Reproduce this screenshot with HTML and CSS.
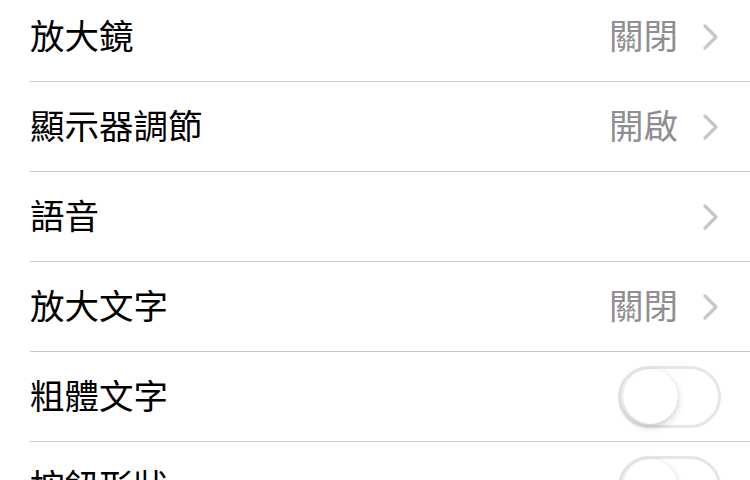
FILE: index.html
```html
<!DOCTYPE html>
<html lang="zh-Hant">
<head>
<meta charset="utf-8">
<link rel="stylesheet" href="styles.css">
</head>
<body>
<ul class="list">
  <li class="row"><span class="label">放大鏡</span><span class="value">關閉</span><svg class="chev" viewBox="0 0 16 26"><path d="M2 2 L13 13 L2 24" /></svg></li>
  <li class="row"><span class="label">顯示器調節</span><span class="value">開啟</span><svg class="chev" viewBox="0 0 16 26"><path d="M2 2 L13 13 L2 24" /></svg></li>
  <li class="row"><span class="label">語音</span><svg class="chev" viewBox="0 0 16 26"><path d="M2 2 L13 13 L2 24" /></svg></li>
  <li class="row"><span class="label">放大文字</span><span class="value">關閉</span><svg class="chev" viewBox="0 0 16 26"><path d="M2 2 L13 13 L2 24" /></svg></li>
  <li class="row"><span class="label">粗體文字</span><span class="switch"><span class="knob"></span></span></li>
  <li class="row"><span class="label">按鈕形狀</span><span class="switch"><span class="knob"></span></span></li>
</ul>
</body>
</html>
```
FILE: styles.css
```css
html, body {
  margin: 0;
  padding: 0;
  background: #fff;
  overflow: hidden;
}
.list {
  list-style: none;
  margin: -8px 0 0 30px;
  padding: 0;
  font-family: "Noto Sans CJK TC", "Noto Sans", sans-serif;
}
.row {
  height: 89px;
  border-bottom: 1px solid #c8c7cc;
  display: flex;
  align-items: center;
  padding-right: 30px;
}
.label {
  flex: 1;
  font-size: 34.5px;
  color: #000;
  line-height: 1;
  padding-bottom: 5px;
}
.value {
  font-size: 34.5px;
  color: #8e8e93;
  line-height: 1;
  padding-bottom: 5px;
  margin-right: 25px;
}
.chev {
  width: 16px;
  height: 26px;
  fill: none;
  stroke: #c7c7cc;
  stroke-width: 3.2;
  stroke-linecap: round;
  stroke-linejoin: round;
  margin-right: 1px;
}
.switch {
  box-sizing: border-box;
  width: 103px;
  height: 62px;
  border: 3px solid #e6e6e6;
  border-radius: 31px;
  background: #fff;
  display: flex;
  align-items: center;
  padding-left: 2px;
  margin-right: -1px;
}
.knob {
  width: 55px;
  height: 55px;
  border-radius: 50%;
  background: #fff;
  box-shadow: 0 3px 7px rgba(0,0,0,0.2), 0 0 1px rgba(0,0,0,0.12);
}
```
